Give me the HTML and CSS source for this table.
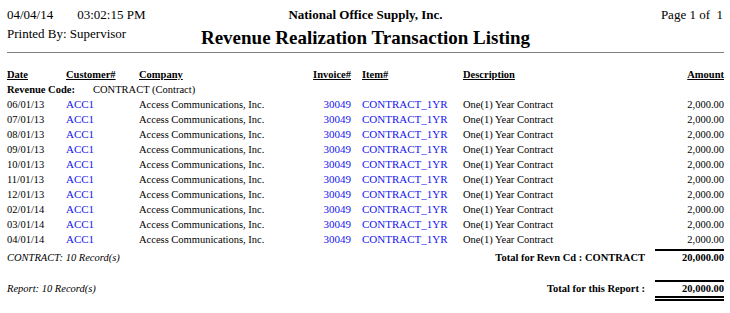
FILE: index.html
```html
<!DOCTYPE html>
<html>
<head>
<meta charset="utf-8">
<link rel="stylesheet" href="styles.css">
</head>
<body>
<div class="page">
  <header class="head">
    <div class="h-left">
      <div class="stamp"><span>04/04/14</span><span class="time">03:02:15 PM</span></div>
      <div class="printed">Printed By: Supervisor</div>
    </div>
    <div class="h-center">
      <div class="company">National Office Supply, Inc.</div>
      <div class="title">Revenue Realization Transaction Listing</div>
    </div>
    <div class="h-right">
      <div class="pageno">Page 1 of&nbsp; 1</div>
    </div>
  </header>
  <div class="rule"></div>

  <div class="grid colhead">
    <div><u>Date</u></div>
    <div><u>Customer#</u></div>
    <div><u>Company</u></div>
    <div class="r"><u>Invoice#</u></div>
    <div><u>Item#</u></div>
    <div><u>Description</u></div>
    <div class="r"><u>Amount</u></div>
  </div>
  <div class="revcode"><b>Revenue Code:</b><span>CONTRACT (Contract)</span></div>

  <div class="rows">
    <div class="grid row"><div>06/01/13</div><div class="blue">ACC1</div><div>Access Communications, Inc.</div><div class="blue r">30049</div><div class="blue">CONTRACT_1YR</div><div>One(1) Year Contract</div><div class="r">2,000.00</div></div>
    <div class="grid row"><div>07/01/13</div><div class="blue">ACC1</div><div>Access Communications, Inc.</div><div class="blue r">30049</div><div class="blue">CONTRACT_1YR</div><div>One(1) Year Contract</div><div class="r">2,000.00</div></div>
    <div class="grid row"><div>08/01/13</div><div class="blue">ACC1</div><div>Access Communications, Inc.</div><div class="blue r">30049</div><div class="blue">CONTRACT_1YR</div><div>One(1) Year Contract</div><div class="r">2,000.00</div></div>
    <div class="grid row"><div>09/01/13</div><div class="blue">ACC1</div><div>Access Communications, Inc.</div><div class="blue r">30049</div><div class="blue">CONTRACT_1YR</div><div>One(1) Year Contract</div><div class="r">2,000.00</div></div>
    <div class="grid row"><div>10/01/13</div><div class="blue">ACC1</div><div>Access Communications, Inc.</div><div class="blue r">30049</div><div class="blue">CONTRACT_1YR</div><div>One(1) Year Contract</div><div class="r">2,000.00</div></div>
    <div class="grid row"><div>11/01/13</div><div class="blue">ACC1</div><div>Access Communications, Inc.</div><div class="blue r">30049</div><div class="blue">CONTRACT_1YR</div><div>One(1) Year Contract</div><div class="r">2,000.00</div></div>
    <div class="grid row"><div>12/01/13</div><div class="blue">ACC1</div><div>Access Communications, Inc.</div><div class="blue r">30049</div><div class="blue">CONTRACT_1YR</div><div>One(1) Year Contract</div><div class="r">2,000.00</div></div>
    <div class="grid row"><div>02/01/14</div><div class="blue">ACC1</div><div>Access Communications, Inc.</div><div class="blue r">30049</div><div class="blue">CONTRACT_1YR</div><div>One(1) Year Contract</div><div class="r">2,000.00</div></div>
    <div class="grid row"><div>03/01/14</div><div class="blue">ACC1</div><div>Access Communications, Inc.</div><div class="blue r">30049</div><div class="blue">CONTRACT_1YR</div><div>One(1) Year Contract</div><div class="r">2,000.00</div></div>
    <div class="grid row"><div>04/01/14</div><div class="blue">ACC1</div><div>Access Communications, Inc.</div><div class="blue r">30049</div><div class="blue">CONTRACT_1YR</div><div>One(1) Year Contract</div><div class="r">2,000.00</div></div>
  </div>

  <div class="total group">
    <div class="note">CONTRACT: 10 Record(s)</div>
    <div class="tlabel">Total for Revn Cd : CONTRACT</div>
    <div class="tamount">20,000.00</div>
  </div>
  <div class="total report">
    <div class="note">Report: 10 Record(s)</div>
    <div class="tlabel">Total for this Report :</div>
    <div class="tamount dbl">20,000.00</div>
  </div>
</div>
</body>
</html>
```
FILE: styles.css
```css
html, body {
  margin: 0;
  padding: 0;
  background: #ffffff;
}
body {
  font-family: "Liberation Serif", "Times New Roman", serif;
  color: #000;
  width: 730px;
  height: 313px;
  overflow: hidden;
}
.page {
  padding: 7px 6px 0 7px;
}
.head {
  display: grid;
  grid-template-columns: 1fr auto 1fr;
  height: 44px;
}
.h-left {
  font-size: 13px;
  line-height: 16px;
}
.stamp .time {
  margin-left: 24px;
}
.printed {
  margin-top: 3px;
}
.h-center {
  text-align: center;
}
.company {
  font-size: 13px;
  font-weight: bold;
  line-height: 16px;
}
.title {
  font-size: 19px;
  font-weight: bold;
  line-height: 23px;
  margin-top: 3px;
}
.h-right {
  text-align: right;
  font-size: 13px;
  line-height: 16px;
  padding-right: 1px;
}
.rule {
  height: 1px;
  background: #808080;
  margin-top: 1px;
}
.grid {
  display: grid;
  grid-template-columns: 59px 73px 172px 40px 112px 1fr 80px;
  column-gap: 0;
}
.grid > div:nth-child(5) {
  padding-left: 11px;
}
.grid > div {
  white-space: nowrap;
}
.r {
  text-align: right;
}
.colhead {
  margin-top: 14px;
  font-size: 10.5px;
  font-weight: bold;
  line-height: 15px;
}
.colhead u {
  text-underline-offset: 1px;
}
.revcode {
  font-size: 10.5px;
  line-height: 15px;
  display: flex;
}
.revcode b {
  width: 86px;
}
.row {
  font-size: 10.5px;
  line-height: 15px;
}
.blue {
  color: #1414ee;
  font-size: 11px;
}
.total {
  display: grid;
  grid-template-columns: 1fr auto 69px;
  column-gap: 10px;
  align-items: start;
  font-size: 10.5px;
  line-height: 13px;
}
.total > .note,
.total > .tlabel {
  padding-top: 2px;
}
.total.group {
  margin-top: 2px;
}
.total.report {
  margin-top: 16px;
}
.note {
  font-style: italic;
}
.tamount {
  border-top: 2px solid #000;
  font-weight: bold;
  text-align: right;
}
.tamount.dbl {
  border-bottom: 5px double #000;
  padding-bottom: 1px;
}
.tlabel {
  font-weight: bold;
}
```
